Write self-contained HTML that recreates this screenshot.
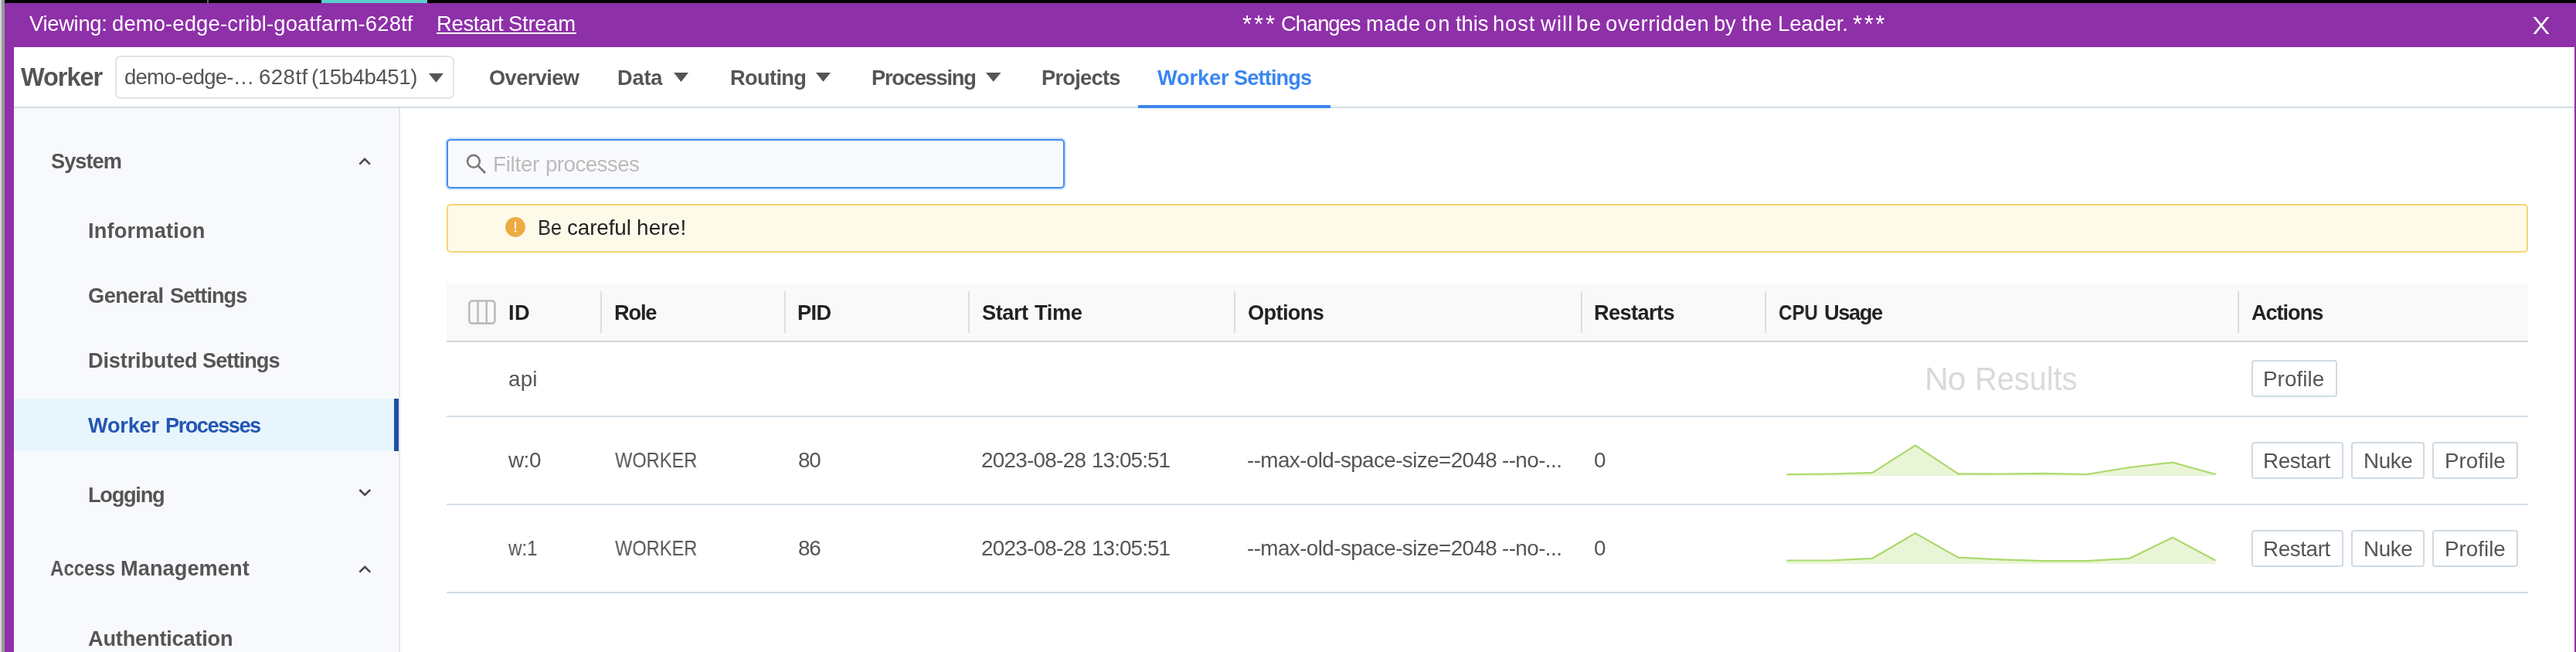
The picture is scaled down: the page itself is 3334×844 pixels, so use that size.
<!DOCTYPE html>
<html><head><meta charset="utf-8"><title>Worker Processes</title>
<style>
html,body{margin:0;padding:0;}
body{width:3334px;height:844px;position:relative;overflow:hidden;background:#fff;font-family:"Liberation Sans",sans-serif;}
.a{position:absolute;box-sizing:border-box;}
.t{position:absolute;white-space:pre;line-height:1;will-change:transform;font-family:"Liberation Sans",sans-serif;}
</style></head><body>
<div class="a" style="left:0px;top:0px;width:2.2px;height:844px;background:#d5d5d5"></div>
<div class="a" style="left:2.2px;top:0px;width:3.8px;height:844px;background:#9a9a9a"></div>
<div class="a" style="left:6px;top:0px;width:3328px;height:4px;background:#000"></div>
<div class="a" style="left:268px;top:0px;width:2px;height:4px;background:#666"></div>
<div class="a" style="left:416px;top:0px;width:137px;height:4px;background:#5ccbcb"></div>
<div class="a" style="left:6px;top:4px;width:3328px;height:57px;background:#8e30a8"></div>
<div class="a" style="left:6px;top:61px;width:12px;height:783px;background:#8e30a8"></div>
<div class="a" style="left:3332px;top:61px;width:2px;height:783px;background:#8e30a8"></div>
<div class="a" style="left:18px;top:138px;width:3314px;height:2px;background:#d3dde5"></div>
<div class="a" style="left:18px;top:140px;width:498px;height:704px;background:#f8f9fc"></div>
<div class="a" style="left:516px;top:140px;width:2px;height:704px;background:#e6e6e6"></div>
<div class="a" style="left:18px;top:516px;width:492px;height:68px;background:#e8f5fd"></div>
<div class="a" style="left:510px;top:516px;width:6px;height:68px;background:#1f4fa9"></div>
<div class="a" style="left:565px;top:42px;width:180.5px;height:2px;background:#fff"></div>
<svg class="a" style="left:3270px;top:14px" width="40" height="40" viewBox="3270 14 40 40"><path d="M3278.5 22 L3281.9 22 L3299.5 44 L3296.1 44 Z M3296.1 22 L3299.5 22 L3281.9 44 L3278.5 44 Z" fill="#fff"/></svg>
<div class="a" style="left:149px;top:72px;width:439px;height:56px;border:2px solid #e4e4e4;border-radius:7px;background:#fff"></div>
<svg class="a" style="left:553.3px;top:92.7px" width="22.90000000000009" height="15.700000000000003" viewBox="553.3 92.7 22.90000000000009 15.700000000000003"><path d="M555.3 94.7 L574.2 94.7 L564.75 106.4 Z" fill="#555"/></svg>
<svg class="a" style="left:870px;top:92px" width="23" height="16" viewBox="870 92 23 16"><path d="M872 94 L891 94 L881.5 106 Z" fill="#555"/></svg>
<svg class="a" style="left:1054.2px;top:92px" width="23.0" height="15.700000000000003" viewBox="1054.2 92 23.0 15.700000000000003"><path d="M1056.2 94 L1075.2 94 L1065.7 105.7 Z" fill="#555"/></svg>
<svg class="a" style="left:1274px;top:92px" width="23.5" height="15.700000000000003" viewBox="1274 92 23.5 15.700000000000003"><path d="M1276 94 L1295.5 94 L1285.75 105.7 Z" fill="#555"/></svg>
<div class="a" style="left:1473px;top:136px;width:249px;height:4px;background:#3a86f2"></div>
<div class="a" style="left:578px;top:180px;width:800px;height:63.5px;border:2px solid #3f8cf4;border-radius:5px;background:#f9fafd;box-shadow:0 0 0 2px rgba(63,140,244,0.22)"></div>
<svg class="a" style="left:598px;top:194px" width="36" height="36" viewBox="598 194 36 36"><circle cx="612.9" cy="208.8" r="7.9" stroke="#7a7a7a" stroke-width="2.6" fill="none"/><path d="M618.4 214.3 L628 223.9" stroke="#7a7a7a" stroke-width="2.8"/></svg>
<div class="a" style="left:578px;top:264px;width:2694px;height:62.60000000000002px;border:2px solid #f7d372;border-radius:5px;background:#fefaea"></div>
<svg class="a" style="left:650px;top:276px" width="34" height="34" viewBox="650 276 34 34"><circle cx="667" cy="293.8" r="12.9" fill="#edab42"/><path d="M665.9 287.5 L668.1 287.5 L667.7 296.7 L666.3 296.7 Z" fill="#fff"/><circle cx="667" cy="299.2" r="1.25" fill="#fff"/></svg>
<div class="a" style="left:578px;top:367px;width:2694px;height:74px;background:#f9f9f9"></div>
<div class="a" style="left:578px;top:441px;width:2694px;height:2px;background:#d6d6d6"></div>
<div class="a" style="left:776.8px;top:377px;width:2.0px;height:53.5px;background:#dddddd"></div>
<div class="a" style="left:1014.9px;top:377px;width:2.0px;height:53.5px;background:#dddddd"></div>
<div class="a" style="left:1253px;top:377px;width:2px;height:53.5px;background:#dddddd"></div>
<div class="a" style="left:1596.8px;top:377px;width:2.0px;height:53.5px;background:#dddddd"></div>
<div class="a" style="left:2045.9px;top:377px;width:2.0px;height:53.5px;background:#dddddd"></div>
<div class="a" style="left:2283.8px;top:377px;width:2.0px;height:53.5px;background:#dddddd"></div>
<div class="a" style="left:2895.9px;top:377px;width:2.0px;height:53.5px;background:#dddddd"></div>
<svg class="a" style="left:600px;top:382px" width="48" height="44" viewBox="600 382 48 44"><rect x="607.3" y="389.5" width="33.1" height="29.1" rx="3.6" stroke="#bbb" stroke-width="2.6" fill="none"/><path d="M618.5 389.5 V418.5 M629.7 389.5 V418.5" stroke="#bbb" stroke-width="2.5"/></svg>
<div class="a" style="left:578px;top:538px;width:2694px;height:2px;background:#d3dde5"></div>
<div class="a" style="left:578px;top:652px;width:2694px;height:2px;background:#d3dde5"></div>
<div class="a" style="left:578px;top:766px;width:2694px;height:2px;background:#d3dde5"></div>
<div class="a" style="left:2914px;top:466px;width:111px;height:48px;border:2px solid #d0dae2;border-radius:4px;background:#fff"></div>
<div class="a" style="left:2914px;top:572px;width:119px;height:48px;border:2px solid #d0dae2;border-radius:4px;background:#fff"></div>
<div class="a" style="left:3043px;top:572px;width:95px;height:48px;border:2px solid #d0dae2;border-radius:4px;background:#fff"></div>
<div class="a" style="left:3148px;top:572px;width:111px;height:48px;border:2px solid #d0dae2;border-radius:4px;background:#fff"></div>
<div class="a" style="left:2914px;top:686px;width:119px;height:48px;border:2px solid #d0dae2;border-radius:4px;background:#fff"></div>
<div class="a" style="left:3043px;top:686px;width:95px;height:48px;border:2px solid #d0dae2;border-radius:4px;background:#fff"></div>
<div class="a" style="left:3148px;top:686px;width:111px;height:48px;border:2px solid #d0dae2;border-radius:4px;background:#fff"></div>
<svg class="a" style="left:2300px;top:545.5px" width="580" height="80" viewBox="2300 545.5 580 80"><path d="M2312.4,615.5 L2312.4,613.5 L2367.9,613.0 L2423.4,611.4 L2478.9,576.1 L2534.4,612.8 L2589.9,613.0 L2645.4,612.3 L2700.9,613.5 L2756.4,604.5 L2811.9,598.1 L2867.4,613.5 L2867.4,615.5 Z" fill="#eaf5d7"/><polyline points="2312.4,613.5 2367.9,613.0 2423.4,611.4 2478.9,576.1 2534.4,612.8 2589.9,613.0 2645.4,612.3 2700.9,613.5 2756.4,604.5 2811.9,598.1 2867.4,613.5" fill="none" stroke="#acd96a" stroke-width="2.2" stroke-linejoin="miter"/></svg>
<svg class="a" style="left:2300px;top:659.5px" width="580" height="80" viewBox="2300 659.5 580 80"><path d="M2312.4,729.5 L2312.4,725.0 L2367.9,725.0 L2423.4,722.3 L2478.9,689.7 L2534.4,721.2 L2589.9,723.9 L2645.4,725.7 L2700.9,725.7 L2756.4,722.3 L2811.9,695.3 L2867.4,725.0 L2867.4,729.5 Z" fill="#eaf5d7"/><polyline points="2312.4,725.0 2367.9,725.0 2423.4,722.3 2478.9,689.7 2534.4,721.2 2589.9,723.9 2645.4,725.7 2700.9,725.7 2756.4,722.3 2811.9,695.3 2867.4,725.0" fill="none" stroke="#acd96a" stroke-width="2.2" stroke-linejoin="miter"/></svg>
<svg class="a" style="left:459.9px;top:200.2px" width="24.100000000000023" height="17.600000000000023" viewBox="459.9 200.2 24.100000000000023 17.600000000000023"><path d="M465.2 212.8 L471.95 206.0 L478.7 212.8" stroke="#4a4a4a" stroke-width="2.6" fill="none"/></svg>
<svg class="a" style="left:459.7px;top:629.3px" width="24.5" height="17.5" viewBox="459.7 629.3 24.5 17.5"><path d="M465.0 634.3 L471.95 641.0 L478.9 634.3" stroke="#4a4a4a" stroke-width="2.6" fill="none"/></svg>
<svg class="a" style="left:459.7px;top:728.3px" width="24.5" height="17.700000000000045" viewBox="459.7 728.3 24.5 17.700000000000045"><path d="M465.0 741.0 L471.95 734.0999999999999 L478.9 741.0" stroke="#4a4a4a" stroke-width="2.6" fill="none"/></svg>
<div class="t" style="left:37.7px;top:16.7px;font-size:27.4px;font-weight:400;color:#ffffff;letter-spacing:-0.314px;">Viewing:</div><div class="t" style="left:145.4px;top:16.7px;font-size:27.4px;font-weight:400;color:#ffffff;letter-spacing:0.145px;">demo-edge-cribl-goatfarm-628tf</div><div class="t" style="left:564.7px;top:16.7px;font-size:27.4px;font-weight:400;color:#ffffff;letter-spacing:-0.283px;">Restart</div><div class="t" style="left:658.0px;top:16.7px;font-size:27.4px;font-weight:400;color:#ffffff;letter-spacing:-0.220px;">Stream</div><div class="t" style="left:1608.2px;top:16.2px;font-size:31px;font-weight:400;color:#ffffff;letter-spacing:2.900px;">***</div><div class="t" style="left:1658.3px;top:16.7px;font-size:27.4px;font-weight:400;color:#ffffff;letter-spacing:-1.033px;">Changes</div><div class="t" style="left:1768.3px;top:16.7px;font-size:27.4px;font-weight:400;color:#ffffff;letter-spacing:0.567px;">made</div><div class="t" style="left:1844.4px;top:16.7px;font-size:27.4px;font-weight:400;color:#ffffff;letter-spacing:2.100px;">on</div><div class="t" style="left:1883.8px;top:16.7px;font-size:27.4px;font-weight:400;color:#ffffff;letter-spacing:-0.100px;">this</div><div class="t" style="left:1931.9px;top:16.7px;font-size:27.4px;font-weight:400;color:#ffffff;letter-spacing:0.867px;">host</div><div class="t" style="left:1993.6px;top:16.7px;font-size:27.4px;font-weight:400;color:#ffffff;letter-spacing:1.100px;">will</div><div class="t" style="left:2039.8px;top:16.7px;font-size:27.4px;font-weight:400;color:#ffffff;letter-spacing:1.600px;">be</div><div class="t" style="left:2078.3px;top:16.7px;font-size:27.4px;font-weight:400;color:#ffffff;letter-spacing:0.467px;">overridden</div><div class="t" style="left:2218.4px;top:16.7px;font-size:27.4px;font-weight:400;color:#ffffff;letter-spacing:-0.300px;">by</div><div class="t" style="left:2254.3px;top:16.7px;font-size:27.4px;font-weight:400;color:#ffffff;letter-spacing:0.700px;">the</div><div class="t" style="left:2300.5px;top:16.7px;font-size:27.4px;font-weight:400;color:#ffffff;letter-spacing:-0.067px;">Leader.</div><div class="t" style="left:2397.9px;top:16.2px;font-size:31px;font-weight:400;color:#ffffff;letter-spacing:2.600px;">***</div><div class="t" style="left:26.5px;top:83.5px;font-size:32.5px;font-weight:700;color:#555555;letter-spacing:-1.040px;">Worker</div><div class="t" style="left:161.2px;top:86.4px;font-size:27.5px;font-weight:400;color:#555555;letter-spacing:-0.760px;">demo-edge-…</div><div class="t" style="left:335.0px;top:86.4px;font-size:27.5px;font-weight:400;color:#555555;letter-spacing:0.500px;">628tf</div><div class="t" style="left:403.0px;top:86.4px;font-size:27.5px;font-weight:400;color:#555555;letter-spacing:-0.367px;">(15b4b451)</div><div class="t" style="left:633.0px;top:86.8px;font-size:27.2px;font-weight:700;color:#555555;letter-spacing:-0.571px;">Overview</div><div class="t" style="left:798.5px;top:86.8px;font-size:27.2px;font-weight:700;color:#555555;letter-spacing:-0.167px;">Data</div><div class="t" style="left:944.5px;top:86.8px;font-size:27.2px;font-weight:700;color:#555555;letter-spacing:-0.617px;">Routing</div><div class="t" style="left:1127.9px;top:86.8px;font-size:27.2px;font-weight:700;color:#555555;letter-spacing:-1.200px;">Processing</div><div class="t" style="left:1347.5px;top:86.8px;font-size:27.2px;font-weight:700;color:#555555;letter-spacing:-0.700px;">Projects</div><div class="t" style="left:1497.5px;top:86.8px;font-size:27.2px;font-weight:700;color:#3a86f2;letter-spacing:-0.120px;">Worker</div><div class="t" style="left:1596.8px;top:86.8px;font-size:27.2px;font-weight:700;color:#3a86f2;letter-spacing:-0.871px;">Settings</div><div class="t" style="left:65.6px;top:195.4px;font-size:27.2px;font-weight:700;color:#555555;letter-spacing:-0.960px;">System</div><div class="t" style="left:113.6px;top:284.9px;font-size:27.2px;font-weight:700;color:#555555;letter-spacing:0.190px;">Information</div><div class="t" style="left:114.0px;top:369.3px;font-size:27.2px;font-weight:700;color:#555555;letter-spacing:-0.517px;">General</div><div class="t" style="left:219.8px;top:369.3px;font-size:27.2px;font-weight:700;color:#555555;letter-spacing:-0.986px;">Settings</div><div class="t" style="left:113.6px;top:452.9px;font-size:27.2px;font-weight:700;color:#555555;letter-spacing:-0.180px;">Distributed</div><div class="t" style="left:262.4px;top:452.9px;font-size:27.2px;font-weight:700;color:#555555;letter-spacing:-0.943px;">Settings</div><div class="t" style="left:114.0px;top:536.9px;font-size:27.2px;font-weight:700;color:#2356b0;letter-spacing:-0.220px;">Worker</div><div class="t" style="left:213.5px;top:536.9px;font-size:27.2px;font-weight:700;color:#2356b0;letter-spacing:-1.487px;">Processes</div><div class="t" style="left:113.5px;top:627.4px;font-size:27.2px;font-weight:700;color:#555555;letter-spacing:-1.267px;">Logging</div><div class="t" style="left:64.9px;top:722.4px;font-size:27.2px;font-weight:700;color:#555555;letter-spacing:0.000px;transform:scaleX(0.8839);transform-origin:0 0;">Access</div><div class="t" style="left:155.5px;top:722.4px;font-size:27.2px;font-weight:700;color:#555555;letter-spacing:0.056px;">Management</div><div class="t" style="left:113.7px;top:812.9px;font-size:27.2px;font-weight:700;color:#555555;letter-spacing:-0.208px;">Authentication</div><div class="t" style="left:637.7px;top:199.4px;font-size:27.8px;font-weight:400;color:#bbbbbb;letter-spacing:-0.280px;">Filter</div><div class="t" style="left:705.6px;top:199.4px;font-size:27.8px;font-weight:400;color:#bbbbbb;letter-spacing:-0.600px;">processes</div><div class="t" style="left:696.0px;top:281.4px;font-size:27.8px;font-weight:400;color:#222222;letter-spacing:0.000px;transform:scaleX(0.9129);transform-origin:0 0;">Be</div><div class="t" style="left:734.4px;top:281.4px;font-size:27.8px;font-weight:400;color:#222222;letter-spacing:-0.100px;">careful</div><div class="t" style="left:823.9px;top:281.4px;font-size:27.8px;font-weight:400;color:#222222;letter-spacing:0.200px;">here!</div><div class="t" style="left:657.9px;top:390.7px;font-size:27.2px;font-weight:700;color:#222222;letter-spacing:0.500px;">ID</div><div class="t" style="left:794.5px;top:390.7px;font-size:27.2px;font-weight:700;color:#222222;letter-spacing:-1.167px;">Role</div><div class="t" style="left:1032.0px;top:390.7px;font-size:27.2px;font-weight:700;color:#222222;letter-spacing:-0.650px;">PID</div><div class="t" style="left:1270.8px;top:390.7px;font-size:27.2px;font-weight:700;color:#222222;letter-spacing:-0.450px;">Start</div><div class="t" style="left:1338.6px;top:390.7px;font-size:27.2px;font-weight:700;color:#222222;letter-spacing:-0.367px;">Time</div><div class="t" style="left:1614.7px;top:390.7px;font-size:27.2px;font-weight:700;color:#222222;letter-spacing:-0.633px;">Options</div><div class="t" style="left:2062.9px;top:390.7px;font-size:27.2px;font-weight:700;color:#222222;letter-spacing:-0.586px;">Restarts</div><div class="t" style="left:2302.3px;top:390.7px;font-size:27.2px;font-weight:700;color:#222222;letter-spacing:0.000px;transform:scaleX(0.8836);transform-origin:0 0;">CPU</div><div class="t" style="left:2360.6px;top:390.7px;font-size:27.2px;font-weight:700;color:#222222;letter-spacing:-1.400px;">Usage</div><div class="t" style="left:2913.6px;top:390.7px;font-size:27.2px;font-weight:700;color:#222222;letter-spacing:-1.067px;">Actions</div><div class="t" style="left:657.6px;top:476.6px;font-size:27.8px;font-weight:400;color:#555555;letter-spacing:0.200px;">api</div><div class="t" style="left:2491.0px;top:468.5px;font-size:42.6px;font-weight:400;color:#d9d9d9;letter-spacing:-1.100px;">No</div><div class="t" style="left:2556.0px;top:468.5px;font-size:42.6px;font-weight:400;color:#d9d9d9;letter-spacing:0.000px;transform:scaleX(0.9326);transform-origin:0 0;">Results</div><div class="t" style="left:2929.4px;top:477.0px;font-size:27.8px;font-weight:400;color:#555555;letter-spacing:0.067px;">Profile</div><div class="t" style="left:658.3px;top:582.4px;font-size:27.8px;font-weight:400;color:#555555;letter-spacing:-0.450px;">w:0</div><div class="t" style="left:795.6px;top:582.4px;font-size:27.8px;font-weight:400;color:#555555;letter-spacing:0.000px;transform:scaleX(0.8500);transform-origin:0 0;">WORKER</div><div class="t" style="left:1033.0px;top:582.4px;font-size:27.8px;font-weight:400;color:#555555;letter-spacing:-1.300px;">80</div><div class="t" style="left:1270.4px;top:582.4px;font-size:27.8px;font-weight:400;color:#555555;letter-spacing:-0.700px;">2023-08-28</div><div class="t" style="left:1412.9px;top:582.4px;font-size:27.8px;font-weight:400;color:#555555;letter-spacing:-0.886px;">13:05:51</div><div class="t" style="left:1614.4px;top:582.4px;font-size:27.8px;font-weight:400;color:#555555;letter-spacing:-0.575px;">--max-old-space-size=2048</div><div class="t" style="left:1943.7px;top:582.4px;font-size:27.8px;font-weight:400;color:#555555;letter-spacing:-0.571px;">--no-...</div><div class="t" style="left:2062.7px;top:582.4px;font-size:27.8px;font-weight:400;color:#555555;letter-spacing:0.000px;">0</div><div class="t" style="left:2929.4px;top:582.6px;font-size:27.8px;font-weight:400;color:#555555;letter-spacing:-0.383px;">Restart</div><div class="t" style="left:3058.5px;top:582.6px;font-size:27.8px;font-weight:400;color:#555555;letter-spacing:-0.400px;">Nuke</div><div class="t" style="left:3164.0px;top:582.6px;font-size:27.8px;font-weight:400;color:#555555;letter-spacing:0.000px;">Profile</div><div class="t" style="left:658.3px;top:696.4px;font-size:27.8px;font-weight:400;color:#555555;letter-spacing:0.000px;transform:scaleX(0.8690);transform-origin:0 0;">w:1</div><div class="t" style="left:795.6px;top:696.4px;font-size:27.8px;font-weight:400;color:#555555;letter-spacing:0.000px;transform:scaleX(0.8500);transform-origin:0 0;">WORKER</div><div class="t" style="left:1033.0px;top:696.4px;font-size:27.8px;font-weight:400;color:#555555;letter-spacing:-1.300px;">86</div><div class="t" style="left:1270.4px;top:696.4px;font-size:27.8px;font-weight:400;color:#555555;letter-spacing:-0.700px;">2023-08-28</div><div class="t" style="left:1412.9px;top:696.4px;font-size:27.8px;font-weight:400;color:#555555;letter-spacing:-0.886px;">13:05:51</div><div class="t" style="left:1614.4px;top:696.4px;font-size:27.8px;font-weight:400;color:#555555;letter-spacing:-0.575px;">--max-old-space-size=2048</div><div class="t" style="left:1943.7px;top:696.4px;font-size:27.8px;font-weight:400;color:#555555;letter-spacing:-0.571px;">--no-...</div><div class="t" style="left:2062.7px;top:696.4px;font-size:27.8px;font-weight:400;color:#555555;letter-spacing:0.000px;">0</div><div class="t" style="left:2929.4px;top:696.6px;font-size:27.8px;font-weight:400;color:#555555;letter-spacing:-0.383px;">Restart</div><div class="t" style="left:3058.5px;top:696.6px;font-size:27.8px;font-weight:400;color:#555555;letter-spacing:-0.400px;">Nuke</div><div class="t" style="left:3164.0px;top:696.6px;font-size:27.8px;font-weight:400;color:#555555;letter-spacing:0.000px;">Profile</div>
</body></html>
